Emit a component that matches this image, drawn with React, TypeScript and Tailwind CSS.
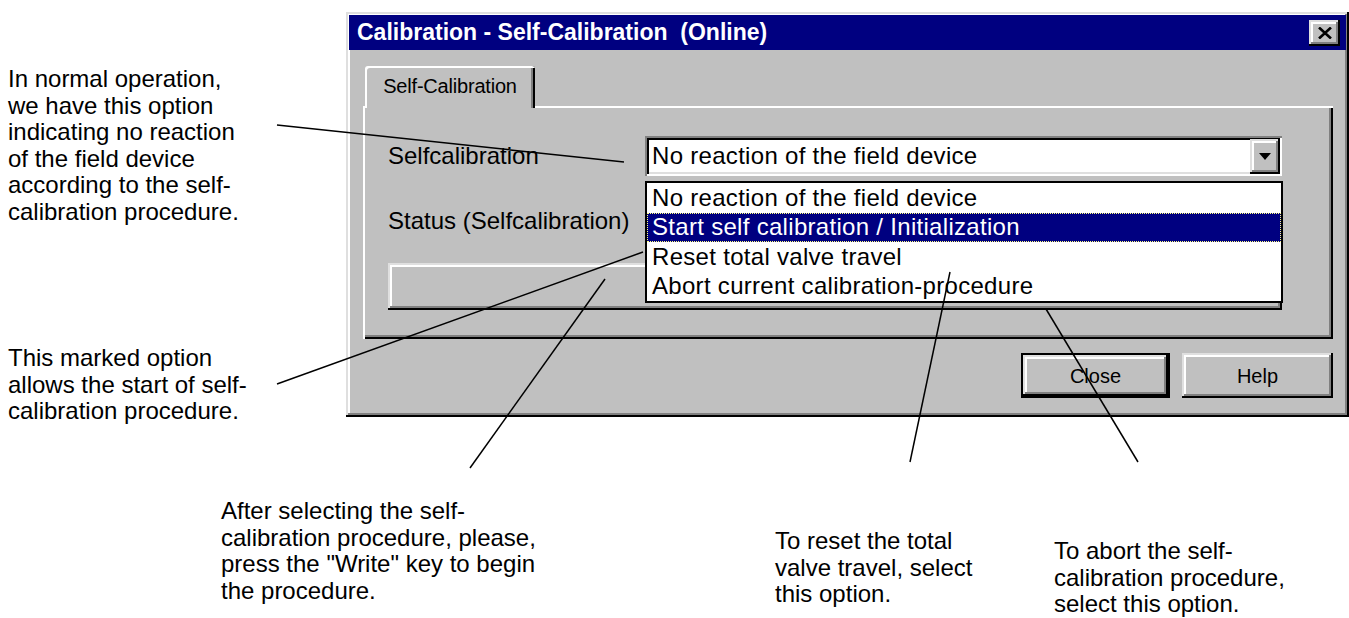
const raised =
  "shadow-[inset_-2px_-2px_#000,inset_2px_2px_#dfdfdf,inset_-4px_-4px_#808080,inset_4px_4px_#fff]";

const options = [
  "No reaction of the field device",
  "Start self calibration / Initialization",
  "Reset total valve travel",
  "Abort current calibration-procedure",
];

function ComboBox() {
  return (
    <div className="relative flex-1 h-[40px]">
      <div className="h-full bg-white flex items-center pl-[7px] pr-[2px] shadow-[inset_2px_2px_#808080,inset_-2px_-2px_#fff,inset_4px_4px_#000,inset_-4px_-4px_#dfdfdf]">
        <span className="tracking-[0.3px]">{options[0]}</span>
        <div className={`ml-auto w-[30px] h-[35px] bg-[#c0c0c0] flex items-center justify-center ${raised}`}>
          <svg width="12" height="7" viewBox="0 0 12 7">
            <polygon points="0,0 12,0 6,7" fill="#000" />
          </svg>
        </div>
      </div>

      {/* open list */}
      <ul className="absolute z-20 top-[45px] left-0 right-[-1px] bg-white border-2 border-black">
        {options.map((opt, i) => (
          <li
            key={opt}
            className={
              i === 1
                ? "h-[29.5px] flex items-center pl-[5px] bg-[#000080] text-white tracking-[0.3px] outline-1 outline-dotted outline-[#ffff80] -outline-offset-1"
                : "h-[29.5px] flex items-center pl-[5px] tracking-[0.3px]"
            }
          >
            {opt}
          </li>
        ))}
      </ul>
    </div>
  );
}

function Dialog() {
  return (
    <div
      className={`mt-[12px] w-[1003px] h-[405px] shrink-0 bg-[#c0c0c0] p-[3px] flex flex-col ${raised}`}
    >
      <div className="h-[35px] shrink-0 bg-[#000080] flex items-center justify-between pl-[8px] pr-[6px]">
        <span className="text-white font-bold text-[23px] whitespace-pre">
          Calibration - Self-Calibration  (Online)
        </span>
        <div className={`w-[31px] h-[26px] bg-[#c0c0c0] flex items-center justify-center ${raised}`}>
          <svg width="14" height="12" viewBox="0 0 14 12">
            <path d="M1 0.5 L13 11.5 M13 0.5 L1 11.5" stroke="#000" strokeWidth="2.6" />
          </svg>
        </div>
      </div>

      <div className="flex-1 flex flex-col pt-[16px] pl-[14px] pr-[13px]">
        <div className="relative z-10 -mb-[2px] ml-[2px] w-[170px] h-[42px] bg-[#c0c0c0] rounded-t-[3px] flex items-center justify-center pb-[2px] text-[20px] tracking-[-0.2px] shadow-[inset_2px_2px_#fff,inset_-2px_0_#000,inset_-4px_0_#808080]">
          Self-Calibration
        </div>

        <div className="h-[233px] pt-[30px] pl-[25px] pr-[51px] flex flex-col shadow-[inset_2px_2px_#fff,inset_-2px_-2px_#000,inset_-4px_-4px_#808080]">
          <div className="h-[40px] flex items-center">
            <span className="w-[257px] shrink-0">Selfcalibration</span>
            <ComboBox />
          </div>
          <div className="mt-[25px] h-[40px] flex items-center">
            <span>Status (Selfcalibration)</span>
          </div>
          <div className={`mt-[22px] h-[47px] bg-[#c0c0c0] ${raised}`} />
        </div>

        <div className="mt-[14px] flex justify-end gap-[12px] text-[20px]">
          <div className="w-[149px] h-[45px] flex items-center justify-center shadow-[inset_0_0_0_2px_#000,inset_-4px_-4px_#000,inset_4px_4px_#dfdfdf,inset_-6px_-6px_#808080,inset_6px_6px_#fff]">
            Close
          </div>
          <div className={`w-[151px] h-[45px] flex items-center justify-center ${raised}`}>
            Help
          </div>
        </div>
      </div>
    </div>
  );
}

export default function App() {
  return (
    <div className="relative w-[1349px] h-[618px] overflow-hidden bg-white text-black font-['Liberation_Sans',Arial,sans-serif] text-[24px]">
      <div className="flex h-[417px]">
        <div className="w-[346px] shrink-0 pl-[8px] leading-[26.5px]">
          <p className="mt-[66px]">
            In normal operation,
            <br />
            we have this option
            <br />
            indicating no reaction
            <br />
            of the field device
            <br />
            according to the self-
            <br />
            calibration procedure.
          </p>
          <p className="mt-[120px]">
            This marked option
            <br />
            allows the start of self-
            <br />
            calibration procedure.
          </p>
        </div>
        <Dialog />
      </div>

      <div className="flex items-start leading-[26.5px]">
        <p className="ml-[221px] w-[554px] mt-[81px]">
          After selecting the self-
          <br />
          calibration procedure, please,
          <br />
          press the "Write" key to begin
          <br />
          the procedure.
        </p>
        <p className="w-[279px] mt-[111px]">
          To reset the total
          <br />
          valve travel, select
          <br />
          this option.
        </p>
        <p className="mt-[121px]">
          To abort the self-
          <br />
          calibration procedure,
          <br />
          select this option.
        </p>
      </div>

      {/* leader lines */}
      <svg
        className="absolute inset-0 z-30 pointer-events-none"
        width="1349"
        height="618"
        viewBox="0 0 1349 618"
      >
        <g stroke="#000" strokeWidth="1.5">
          <line x1="277" y1="125" x2="624" y2="162" />
          <line x1="277" y1="384" x2="643" y2="252" />
          <line x1="470" y1="468" x2="605" y2="279" />
          <line x1="910" y1="462" x2="950" y2="272" />
          <line x1="1138" y1="462" x2="1046" y2="309" />
        </g>
      </svg>
    </div>
  );
}
